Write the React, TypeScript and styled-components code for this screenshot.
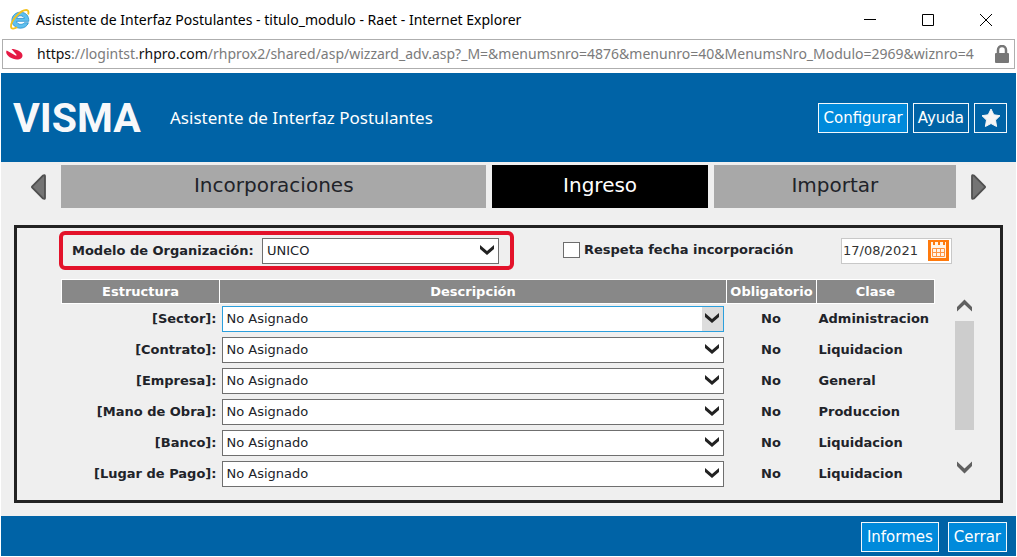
import React from "react";
import styled, { createGlobalStyle } from "styled-components";

const segoe = `"Noto Sans", "Open Sans", sans-serif`;
const verdana = `"DejaVu Sans", sans-serif`;
const ink = "#212329";

const GlobalStyle = createGlobalStyle`
  *, *::before, *::after { box-sizing: border-box; }
  body { margin: 0; background: #fff; }
  button, input, select { font: inherit; color: inherit; margin: 0; }
`;

const Window = styled.div`
  display: flex;
  flex-direction: column;
  min-height: 100vh;
  background: #fff;
  color: ${ink};
  font-family: ${verdana};
  font-size: 13px;
`;

const TitleBar = styled.div`
  display: flex;
  align-items: center;
  height: 39px;
  padding: 0 16px 0 10px;
  color: #000;
  font-family: ${segoe};
  font-size: 14px;
  line-height: 20px;
`;

const WindowTitle = styled.h1`
  flex: 1;
  margin: 0 0 0 6px;
  font-size: inherit;
  font-weight: 400;
  white-space: nowrap;
`;

const WindowControls = styled.div`
  display: flex;
  align-items: center;
  gap: 28px;
`;

const WindowButton = styled.button`
  display: grid;
  place-items: center;
  width: 30px;
  height: 30px;
  padding: 0;
  border: 0;
  background: none;
`;

const AddressBar = styled.div`
  display: flex;
  align-items: center;
  height: 30px;
  margin: 0 2px 4px;
  padding: 0 4px 0 3px;
  border: 1px solid #aeaeae;
  color: #7b7b7b;
  font-family: ${segoe};
  font-size: 14px;
  line-height: 20px;
`;

const Url = styled.div`
  flex: 1;
  min-width: 0;
  margin: 0 6px 0 14px;
  overflow: hidden;
  white-space: nowrap;
`;

const Host = styled.span`
  color: #111;
`;

const Page = styled.div`
  display: flex;
  flex: 1;
  flex-direction: column;
  margin: 0 1px 1px;
  background: #efefef;
`;

const Header = styled.header`
  display: flex;
  align-items: center;
  height: 89px;
  padding: 0 9px 0 12px;
  background: #0063a6;
  color: #fff;
`;

const Logo = styled.div`
  width: 128px;
  margin-right: 29px;
  color: #f7f8fa;
  font-family: Roboto, "Liberation Sans", sans-serif;
  font-size: 41px;
  font-weight: 700;
  line-height: 50px;
`;

const HeaderTitle = styled.h2`
  flex: 1;
  margin: 0;
  font-family: ${segoe};
  font-size: 17px;
  font-weight: 400;
  line-height: 24px;
`;

const ButtonGroup = styled.div<{ $gap: number }>`
  display: flex;
  gap: ${(p) => p.$gap}px;
`;

const ActionButton = styled.button<{ $primary?: boolean }>`
  display: flex;
  align-items: center;
  justify-content: center;
  height: 30px;
  min-width: 33px;
  padding: 0 4px;
  border: 1px solid #f2f8fc;
  background: ${(p) => (p.$primary ? "#008adb" : "#0063a6")};
  color: #fff;
  font-size: 15px;
  line-height: 20px;
`;

const Tabs = styled.nav`
  display: flex;
  align-items: center;
  gap: 6px;
  padding: 3px 30px 0;
`;

const TabArrow = styled.button`
  display: flex;
  width: 15px;
  height: 26px;
  margin: 0 9px 0 0;
  padding: 0;
  border: 0;
  background: none;
  &:last-child {
    margin: 0 0 0 9px;
  }
`;

const Tab = styled.button<{ $grow: number; $active?: boolean }>`
  flex: ${(p) => p.$grow} 1 0;
  height: 43px;
  padding: 0 0 3px;
  border: 0;
  background: ${(p) => (p.$active ? "#000" : "#a8a8a8")};
  color: ${(p) => (p.$active ? "#fff" : ink)};
  font-size: 20px;
  line-height: 24px;
`;

const Panel = styled.main`
  flex: 1;
  margin: 17px 13px 13px;
  padding: 3px 26px 6px 42px;
  border: 3px solid #222;
`;

const Filters = styled.div`
  display: flex;
  align-items: center;
  margin-bottom: 9px;
  padding-right: 22px;
`;

const Label = styled.label`
  font-weight: 700;
  line-height: 18px;
  white-space: nowrap;
`;

const ModelField = styled.div`
  display: flex;
  flex: 0 0 455px;
  align-items: center;
  height: 39px;
  padding: 0 11px 0 9px;
  border: 4px solid #e3122a;
  border-radius: 6px;
  ${Label} {
    flex: 0 0 190px;
  }
`;

const CheckField = styled.div`
  display: flex;
  flex: 1;
  align-items: center;
  gap: 4px;
  margin: 0 0 2px 49px;
`;

const Checkbox = styled.input`
  appearance: none;
  width: 17px;
  height: 16px;
  border: 1px solid #6d6d6d;
  background: #fff;
`;

const DateField = styled.div`
  display: flex;
  align-items: center;
  justify-content: space-between;
  width: 111px;
  height: 26px;
  padding: 0 2px 0 0;
  border: 1px solid #c8c8c8;
  background: #fff;
`;

const DateInput = styled.input`
  width: 84px;
  padding: 0 0 0 1px;
  border: 0;
  background: none;
  color: #333;
  line-height: 18px;
`;

const IconButton = styled.button`
  display: flex;
  padding: 0;
  border: 0;
  background: none;
`;

const SelectBox = styled.div<{ $focused?: boolean }>`
  display: grid;
  flex: 1;
  height: 26px;
  border: 1px solid ${(p) => (p.$focused ? "#2c9fdc" : "#6f6f6f")};
  background: ${(p) =>
    p.$focused ? "linear-gradient(#ddd, #ddd) right / 21px 100% no-repeat #fff" : "#fff"};
  > * {
    grid-area: 1 / 1;
  }
  svg {
    align-self: center;
    justify-self: end;
    margin: 0 4px 2px 0;
    pointer-events: none;
  }
`;

const NativeSelect = styled.select`
  appearance: none;
  width: 100%;
  height: 24px;
  padding: 0 4px;
  border: 0;
  outline: 0;
  background: none;
  font-weight: 400;
`;

const Listing = styled.div`
  display: flex;
  gap: 20px;
  padding-left: 2px;
`;

const Table = styled.table`
  flex: 1;
  align-self: flex-start;
  border-collapse: collapse;
  table-layout: fixed;
  font-weight: 700;
`;

const HeadCell = styled.th<{ $width?: number }>`
  width: ${(p) => (p.$width ? p.$width + "px" : "auto")};
  height: 24px;
  padding: 0;
  border: 1px solid #fff;
  background: #888;
  color: #fff;
  line-height: 18px;
`;

const Cell = styled.td<{ $align?: "center" | "right" }>`
  height: 31px;
  padding: 0 3px 0 2px;
  line-height: 18px;
  text-align: ${(p) => p.$align ?? "left"};
  white-space: nowrap;
`;

const Scrollbar = styled.div`
  display: flex;
  flex-direction: column;
  align-items: center;
  width: 19px;
  margin: 20px 0 16px;
`;

const ScrollTrack = styled.div`
  flex: 1;
  width: 100%;
  margin: 9px 0 17px;
`;

const ScrollThumb = styled.div`
  height: 109px;
  background: #cdcdcd;
`;

const Footer = styled.footer`
  display: flex;
  align-items: center;
  justify-content: flex-end;
  height: 40px;
  padding: 2px 9px 0;
  background: #0063a6;
  ${ActionButton} {
    padding: 0 5px;
  }
`;

const rows = [
  ["Sector", "Administracion"],
  ["Contrato", "Liquidacion"],
  ["Empresa", "General"],
  ["Mano de Obra", "Produccion"],
  ["Banco", "Liquidacion"],
  ["Lugar de Pago", "Liquidacion"],
];

function Select({ id, value, focused }: { id: string; value: string; focused?: boolean }) {
  return (
    <SelectBox $focused={focused}>
      <NativeSelect id={id} defaultValue={value}>
        <option>{value}</option>
      </NativeSelect>
      <svg width="14" height="10" viewBox="0 0 14 10" aria-hidden="true">
        <path d="M0 0 7 6 14 0V4L7 10 0 4Z" fill="#222" />
      </svg>
    </SelectBox>
  );
}

function ExplorerIcon() {
  return (
    <svg width="20" height="21" viewBox="0 0 20 21" aria-hidden="true">
      <path
        d="M18.800 12.300H6.600c.3 1.900 1.900 3 4.100 3 1.600 0 2.700-.5 3.600-1.500h4.100c-1.200 3.300-4.100 5.400-7.900 5.400-4.900 0-8.600-3.200-8.600-7.900C1.900 6.600 5.700 3.200 10.500 3.200c5.300 0 8.600 3.700 8.300 9.100ZM6.700 9.400h7.600c-.4-1.600-1.800-2.600-3.800-2.600s-3.400 1-3.800 2.600Z"
        fill="#5fc0ee"
        stroke="#238dcc"
        strokeWidth="0.800"
      />
      <path
        d="M18.200 5.500C18.900 2.600 18.300 1 16.200 1 10.500 1 .9 11.300 1 17.400c.1 2.900 3.300 2.500 6.200.9"
        fill="none"
        stroke="#f3c11d"
        strokeWidth="1.800"
      />
    </svg>
  );
}

function SiteIcon() {
  return (
    <svg width="17" height="11" viewBox="0 0 17 11" aria-hidden="true">
      <path
        d="M5.500 0C10 0 16.500 2.500 16.500 6.500c0 2.600-2.500 4-5.500 4C6 10.500.2 6.500.2 3.200.2 2.500.3 2 .7 1.500L9.500 6.500c.9.400 1.400-.2.800-.9Z"
        fill="#e51a44"
      />
    </svg>
  );
}

function CalendarIcon() {
  return (
    <svg width="21" height="21" viewBox="0 0 21 21" aria-hidden="true">
      <path d="M0 0h21v21H0z" fill="#ff7a0d" />
      <path d="M3 2h2v3h2V2h3v3h2V2h3v3h2V2h1v16H3z" fill="#fff3e6" />
      <path d="M4.500 8.500h12v8h-12zM8.500 8.500v8M12.500 8.500v8M4.500 12.500h12" fill="none" stroke="#ff9340" />
    </svg>
  );
}

function ScrollArrow({ down }: { down?: boolean }) {
  return (
    <svg width="15" height="13" viewBox="0 0 15 13" aria-hidden="true">
      <path
        d={down ? "M0 0.500 7.500 7.500 15 0.500V5L7.500 12.500 0 5Z" : "M0 12.500 7.500 5.500 15 12.500V8L7.500 0.500 0 8Z"}
        fill="#606060"
      />
    </svg>
  );
}

function TriangleIcon({ right }: { right?: boolean }) {
  return (
    <svg width="15" height="26" viewBox="0 0 15 26" aria-hidden="true">
      <path
        d={right ? "M1 2Q1 .5 3 1.500L14 12.500v1L3 24.500Q1 25.500 1 24Z" : "M14 2Q14 .5 12 1.500L1 12.500v1l11 11Q14 25.500 14 24Z"}
        fill="#747474"
        stroke="#505050"
        strokeWidth="1.800"
      />
    </svg>
  );
}

export default function App() {
  return (
    <Window>
      <GlobalStyle />
      <TitleBar>
        <ExplorerIcon />
        <WindowTitle>Asistente de Interfaz Postulantes - titulo_modulo - Raet - Internet Explorer</WindowTitle>
        <WindowControls>
          <WindowButton aria-label="Minimizar">
            <svg width="12" height="12"><path d="M0 5.500h12" stroke="#000" /></svg>
          </WindowButton>
          <WindowButton aria-label="Maximizar">
            <svg width="12" height="12"><path d="M.5.5h11v11H.5z" stroke="#000" fill="none" /></svg>
          </WindowButton>
          <WindowButton aria-label="Cerrar ventana">
            <svg width="12" height="12"><path d="m0 0 12 12M12 0 0 12" stroke="#000" /></svg>
          </WindowButton>
        </WindowControls>
      </TitleBar>
      <AddressBar>
        <SiteIcon />
        <Url>
          <Host>https</Host>://logintst.<Host>rhpro.com</Host>
          /rhprox2/shared/asp/wizzard_adv.asp?_M=&amp;menumsnro=4876&amp;menunro=40&amp;MenumsNro_Modulo=2969&amp;wiznro=4
        </Url>
        <svg width="16" height="18" viewBox="0 0 16 18" aria-hidden="true">
          <path d="M4 9V5a4 4 0 0 1 8 0v4" fill="none" stroke="#777" strokeWidth="2.500" />
          <rect x="1" y="8" width="14" height="10" rx="1" fill="#777" />
        </svg>
      </AddressBar>
      <Page>
        <Header>
          <Logo>VISMA</Logo>
          <HeaderTitle>Asistente de Interfaz Postulantes</HeaderTitle>
          <ButtonGroup $gap={5}>
            <ActionButton $primary>Configurar</ActionButton>
            <ActionButton>Ayuda</ActionButton>
            <ActionButton aria-label="Favoritos">
              <svg width="20" height="20" viewBox="0 0 20 20" aria-hidden="true">
                <path
                  d="m10 1 2.800 5.800 6.200.9-4.500 4.400 1.100 6.400L10 15.500l-5.600 3 1.100-6.400L1 7.700l6.200-.9Z"
                  fill="#f6f6f6"
                  stroke="#f6f6f6"
                  strokeLinejoin="round"
                />
              </svg>
            </ActionButton>
          </ButtonGroup>
        </Header>
        <Tabs>
          <TabArrow aria-label="Anterior"><TriangleIcon /></TabArrow>
          <Tab $grow={425}>Incorporaciones</Tab>
          <Tab $grow={215} $active>Ingreso</Tab>
          <Tab $grow={242}>Importar</Tab>
          <TabArrow aria-label="Siguiente"><TriangleIcon right /></TabArrow>
        </Tabs>
        <Panel>
          <Filters>
            <ModelField>
              <Label htmlFor="modelo">Modelo de Organización:</Label>
              <Select id="modelo" value="UNICO" />
            </ModelField>
            <CheckField>
              <Checkbox id="respeta" type="checkbox" />
              <Label htmlFor="respeta">Respeta fecha incorporación</Label>
            </CheckField>
            <DateField>
              <DateInput aria-label="Fecha de incorporación" defaultValue="17/08/2021" />
              <IconButton aria-label="Abrir calendario"><CalendarIcon /></IconButton>
            </DateField>
          </Filters>
          <Listing>
            <Table>
              <thead>
                <tr>
                  <HeadCell $width={158}>Estructura</HeadCell>
                  <HeadCell>Descripción</HeadCell>
                  <HeadCell $width={90}>Obligatorio</HeadCell>
                  <HeadCell $width={118}>Clase</HeadCell>
                </tr>
              </thead>
              <tbody>
                {rows.map(([name, kind], i) => (
                  <tr key={name}>
                    <Cell $align="right">
                      <Label htmlFor={"estructura-" + i}>[{name}]:</Label>
                    </Cell>
                    <Cell>
                      <Select id={"estructura-" + i} value="No Asignado" focused={i === 0} />
                    </Cell>
                    <Cell $align="center">No</Cell>
                    <Cell>{kind}</Cell>
                  </tr>
                ))}
              </tbody>
            </Table>
            <Scrollbar>
              <IconButton aria-label="Subir"><ScrollArrow /></IconButton>
              <ScrollTrack><ScrollThumb /></ScrollTrack>
              <IconButton aria-label="Bajar"><ScrollArrow down /></IconButton>
            </Scrollbar>
          </Listing>
        </Panel>
        <Footer>
          <ButtonGroup $gap={9}>
            <ActionButton $primary>Informes</ActionButton>
            <ActionButton $primary>Cerrar</ActionButton>
          </ButtonGroup>
        </Footer>
      </Page>
    </Window>
  );
}
